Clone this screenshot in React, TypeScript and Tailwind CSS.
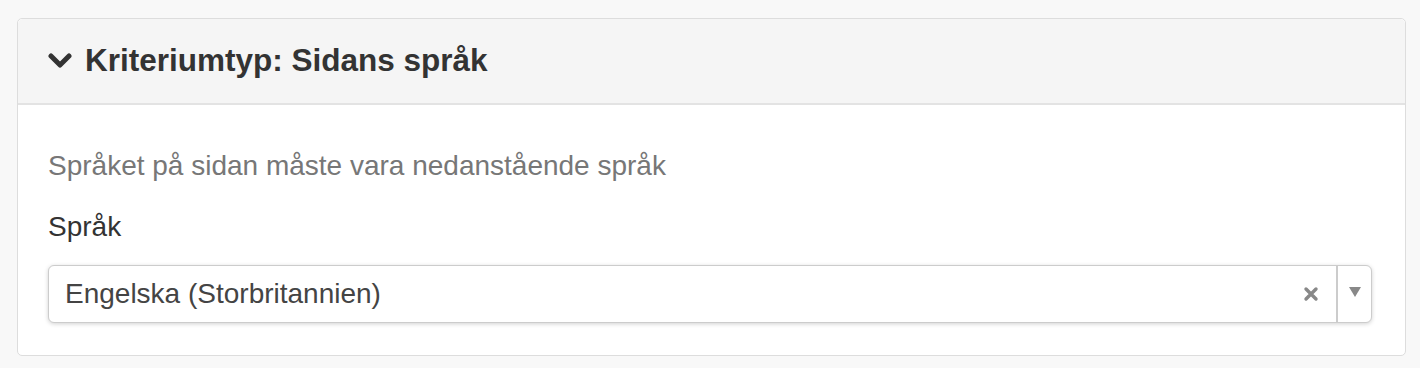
import React from 'react';

export default function App() {
  return (
    <div className="min-h-[368px] bg-[#f8f8f8] pt-[18px] pl-[17px] pr-[14px] [font-family:'Liberation_Sans',Arial,sans-serif]">
      <div className="rounded-[5px] border border-[#dddddd] bg-white">
        {/* Header */}
        <div className="flex h-[86px] items-center gap-[13px] rounded-t-[5px] border-b-2 border-[#e3e3e3] bg-[#f5f5f5] px-[30px]">
          <svg width="24" height="18" viewBox="0 0 24 18" className="text-[#333]">
            <polyline
              points="3,4 12,13 21,4"
              fill="none"
              stroke="currentColor"
              strokeWidth="5"
              strokeLinecap="round"
              strokeLinejoin="round"
            />
          </svg>
          <h2 className="text-[31.5px] font-bold leading-none text-[#333333]">Kriteriumtyp: Sidans språk</h2>
        </div>

        {/* Body */}
        <div className="pl-[30px] pr-[33px] pt-[45px] pb-[32px]">
          <p className="text-[28px] leading-[32px] text-[#777777]">
            Språket på sidan måste vara nedanstående språk
          </p>
          <label className="mt-[29px] block text-[28px] leading-[32px] text-[#333333]">Språk</label>
          <div className="mt-[22px] flex h-[58px] items-stretch rounded-[6px] border border-[#cccccc] bg-white shadow-[0_1px_4px_rgba(0,0,0,0.18)]">
            <div className="flex flex-1 items-center pl-[16px] text-[28px] text-[#444444]">
              Engelska (Storbritannien)
            </div>
            <div className="flex w-[50px] items-center justify-center">
              <svg width="16" height="16" viewBox="0 0 16 16">
                <path d="M3 3 L13 13 M13 3 L3 13" stroke="#888888" strokeWidth="3.4" strokeLinecap="round" />
              </svg>
            </div>
            <div className="w-[2px] bg-[#cccccc]" />
            <div className="flex w-[33px] items-center justify-center pb-[4px]">
              <svg width="12" height="10" viewBox="0 0 12 10">
                <polygon points="0,0 12,0 6,10" fill="#888888" />
              </svg>
            </div>
          </div>
        </div>
      </div>
    </div>
  );
}
